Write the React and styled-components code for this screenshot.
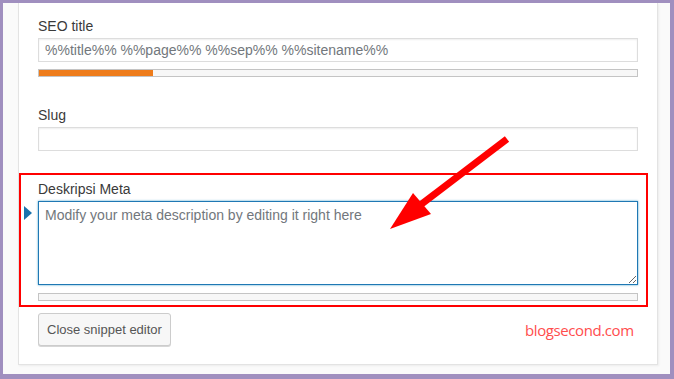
import React from "react";
import styled, { createGlobalStyle } from "styled-components";

const GlobalStyle = createGlobalStyle`
    html, body {
        margin: 0;
        padding: 0;
        background: #ffffff;
    }
    body {
        font-family: "Liberation Sans", Arial, sans-serif;
    }
`;

const Frame = styled.div`
    position: relative;
    width: 674px;
    height: 379px;
    box-sizing: border-box;
    overflow: hidden;
    display: flex;
    flex-direction: column;
    background: #fafafa;
    border-style: solid;
    border-color: #a08fbf;
    border-width: 3px 4px 5px 3px;
    padding: 0 12px 9px 15px;
`;

const Card = styled.div`
    flex: 1;
    display: flex;
    flex-direction: column;
    background: #ffffff;
    border: 1px solid #e3e3e3;
    border-top: none;
    box-shadow: 1px 1px 2px rgba(0, 0, 0, 0.06);
    padding: 13px 19px 0 19px;
`;

const Field = styled.div`
    position: relative;
    display: flex;
    flex-direction: column;
    margin-top: ${(props) => props.$gap || 0}px;
`;

const Label = styled.label`
    font-size: 14px;
    line-height: 20px;
    color: #3a3a3a;
    margin-bottom: 2px;
`;

const TextInput = styled.input`
    box-sizing: border-box;
    width: 100%;
    height: 24px;
    margin: 0;
    padding: 1px 6px;
    font-family: "Liberation Sans", Arial, sans-serif;
    font-size: 14px;
    line-height: 20px;
    color: #32373c;
    background: #ffffff;
    border: 1px solid #dddddd;
    box-shadow: inset 0 1px 2px rgba(0, 0, 0, 0.07);
    outline: none;

    &::placeholder {
        color: #72777c;
        opacity: 1;
    }
`;

const TextArea = styled.textarea`
    display: block;
    box-sizing: border-box;
    width: 100%;
    height: 84px;
    margin: 0;
    padding: 3px 6px;
    font-family: "Liberation Sans", Arial, sans-serif;
    font-size: 14px;
    line-height: 20px;
    color: #32373c;
    background: #ffffff;
    border: 1px solid #1f78b4;
    box-shadow: 0 0 2px rgba(30, 140, 190, 0.8);
    outline: none;
    resize: vertical;

    &::placeholder {
        color: #72777c;
        opacity: 1;
    }
`;

const Progress = styled.div`
    box-sizing: border-box;
    height: 8px;
    margin-top: ${(props) => props.$gap}px;
    background: #f7f7f7;
    border: 1px solid #c4c4c4;
    overflow: hidden;
`;

const ProgressFill = styled.div`
    height: 100%;
    background: #ee7c1b;
`;

const FocusMarker = styled.span`
    position: absolute;
    left: -14px;
    top: 27px;
    width: 0;
    height: 0;
    border-left: 8px solid #1a73ad;
    border-top: 7px solid transparent;
    border-bottom: 7px solid transparent;
`;

const Button = styled.button`
    align-self: flex-start;
    box-sizing: border-box;
    height: 33px;
    margin-top: 12px;
    padding: 0 8px;
    font-family: "Liberation Sans", Arial, sans-serif;
    font-size: 13px;
    color: #555555;
    background: #f7f7f7;
    border: 1px solid #cccccc;
    border-radius: 3px;
    box-shadow: 0 1px 0 #d6d6d6;
    cursor: pointer;
`;

const Highlight = styled.div`
    position: absolute;
    left: 16px;
    top: 170px;
    width: 629px;
    height: 134px;
    box-sizing: border-box;
    border: 2px solid #ff0000;
    pointer-events: none;
`;

const ArrowLayer = styled.svg`
    position: absolute;
    left: -3px;
    top: -3px;
    width: 674px;
    height: 379px;
    pointer-events: none;
`;

const Watermark = styled.span`
    position: absolute;
    left: 522px;
    top: 317px;
    font-family: "Open Sans", sans-serif;
    font-size: 15px;
    line-height: 20px;
    letter-spacing: -0.4px;
    color: #ff4d4d;
`;

export default function App() {
    const titleScore = 19;

    return (
        <>
            <GlobalStyle />
            <Frame>
                <Card>
                    <Field>
                        <Label>SEO title</Label>
                        <TextInput placeholder="%%title%% %%page%% %%sep%% %%sitename%%" />
                        <Progress $gap={7}>
                            <ProgressFill style={{ width: `${titleScore}%` }} />
                        </Progress>
                    </Field>
                    <Field $gap={28}>
                        <Label>Slug</Label>
                        <TextInput />
                    </Field>
                    <Field $gap={28}>
                        <FocusMarker />
                        <Label>Deskripsi Meta</Label>
                        <TextArea placeholder="Modify your meta description by editing it right here" />
                        <Progress $gap={8} />
                    </Field>
                    <Button>Close snippet editor</Button>
                </Card>
                <Highlight />
                <ArrowLayer viewBox="0 0 674 379">
                    <line x1="507" y1="139" x2="419" y2="206" stroke="#ff0000" strokeWidth="7" />
                    <polygon points="390,229 413,193 431,214" fill="#ff0000" />
                </ArrowLayer>
                <Watermark>blogsecond.com</Watermark>
            </Frame>
        </>
    );
}
